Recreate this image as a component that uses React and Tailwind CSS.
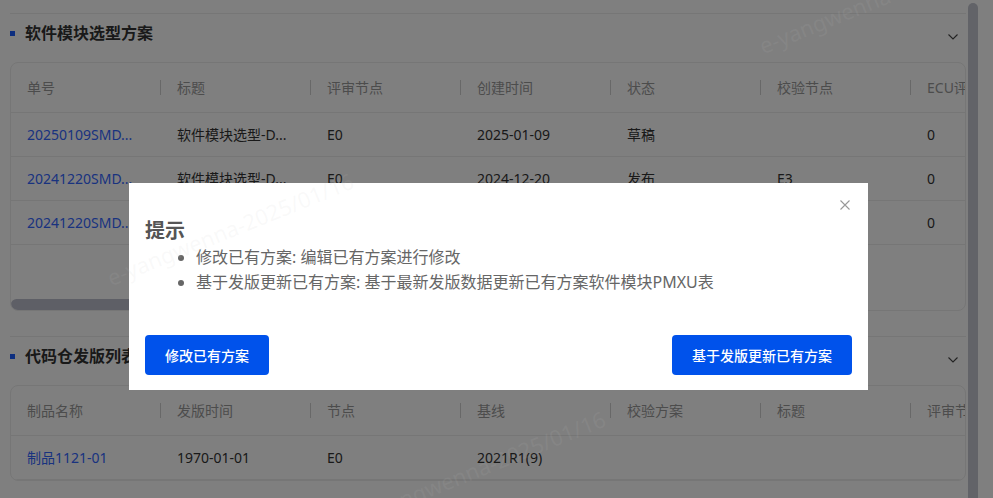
import React from "react";

const font = "font-['Noto_Sans','Noto_Sans_CJK_SC',sans-serif]";

const table1 = {
  head: ["单号", "标题", "评审节点", "创建时间", "状态", "校验节点", "ECU评审节点"],
  rows: [
    ["20250109SMD...", "软件模块选型-D...", "E0", "2025-01-09", "草稿", "", "0"],
    ["20241220SMD...", "软件模块选型-D...", "E0", "2024-12-20", "发布", "E3", "0"],
    ["20241220SMD...", "软件模块选型-D...", "E0", "2024-12-20", "发布", "E3", "0"],
  ],
};

const table2 = {
  head: ["制品名称", "发版时间", "节点", "基线", "校验方案", "标题", "评审节点"],
  rows: [["制品1121-01", "1970-01-01", "E0", "2021R1(9)", "", "", ""]],
};

const Chevron = () => (
  <svg width="10" height="6" viewBox="0 0 10 6" fill="none" className="mt-2">
    <path d="M0.5 0.5L5 5L9.5 0.5" stroke="#444" strokeWidth="1.1" />
  </svg>
);

const Table = ({ data, spacer }) => (
  <div className="border border-[#ececec] rounded-[8px] overflow-hidden bg-white">
    <div className="grid grid-cols-[repeat(7,150px)] h-[50px] border-b border-[#ececec] text-[14px] text-[#999]">
      {data.head.map((h, i) => (
        <div key={i} className="flex items-center justify-between pl-4 whitespace-nowrap">
          <span>{h}</span>
          {i < 6 && <span className="w-px h-[15px] bg-[#d0d0d0]" />}
        </div>
      ))}
    </div>
    {data.rows.map((r, ri) => (
      <div key={ri} className="grid grid-cols-[repeat(7,150px)] h-[44px] border-b border-[#ececec] text-[14px] text-[#333]">
        {r.map((c, ci) => (
          <div key={ci} className={`flex items-center pl-4 whitespace-nowrap ${ci === 0 ? "text-[#3366ff]" : ""}`}>
            {c}
          </div>
        ))}
      </div>
    ))}
    {spacer && (
      <>
        <div className="h-[54px]" />
        <div className="h-[11px] w-[700px] rounded-full bg-[#bcbecc]" />
      </>
    )}
  </div>
);

const Section = ({ title, children }) => (
  <div>
    <div className="border-t border-[#ececec] h-[39px] flex items-center justify-between pr-2">
      <div className="flex items-center gap-[10px]">
        <span className="w-[5px] h-[5px] bg-[#1a5cff]" />
        <span className="text-[16px] font-bold text-[#333]">{title}</span>
      </div>
      <Chevron />
    </div>
    <div className="mt-[10px]">{children}</div>
  </div>
);

const marks = [
  { x: 108, y: 262 },
  { x: 760, y: 30 },
  { x: 360, y: 500 },
];

export default function App() {
  return (
    <div className={`${font} relative w-[993px] h-[498px] overflow-hidden bg-white`}>
      <div className="flex h-full">
        <div className="w-[956px] ml-[10px] pt-[13px]">
          <Section title="软件模块选型方案">
            <Table data={table1} spacer />
          </Section>
          <div className="h-[25px]" />
          <Section title="代码仓发版列表">
            <Table data={table2} />
          </Section>
        </div>
        <div className="ml-[2px] mt-[3px] w-[10px] h-[520px] rounded-full bg-[#c4c6d0]" />
      </div>

      {/* mask */}
      <div className="absolute inset-0 bg-black/50" />

      {/* dialog */}
      <div className="absolute left-[129px] top-[183px] w-[739px] h-[207px] bg-white px-4 pt-[34px]">
        <svg className="absolute top-[17px] right-[18px]" width="10" height="10" viewBox="0 0 10 10">
          <path d="M0.5 0.5L9.5 9.5M9.5 0.5L0.5 9.5" stroke="#999" strokeWidth="1.1" />
        </svg>
        <div className="text-[20px] leading-[28px] font-bold text-[#555]">提示</div>
        <ul className="list-disc pl-[51px] text-[16px] leading-[25px] text-[#666]">
          <li>修改已有方案: 编辑已有方案进行修改</li>
          <li>基于发版更新已有方案: 基于最新发版数据更新已有方案软件模块PMXU表</li>
        </ul>
        <div className="mt-10 flex justify-between">
          <button className="h-[40px] px-5 rounded-[4px] bg-[#0052eb] text-white text-[14px] font-medium">
            修改已有方案
          </button>
          <button className="h-[40px] px-5 rounded-[4px] bg-[#0052eb] text-white text-[14px] font-medium">
            基于发版更新已有方案
          </button>
        </div>
      </div>

      {/* watermark */}
      <div className="absolute inset-0 pointer-events-none">
        {marks.map((m, i) => (
          <span
            key={i}
            className="absolute whitespace-nowrap text-[22px] text-[#c8c8c8]/10 origin-left"
            style={{ left: m.x, top: m.y, transform: "rotate(-22deg)" }}
          >
            e-yangwenna-2025/01/16
          </span>
        ))}
      </div>
    </div>
  );
}
